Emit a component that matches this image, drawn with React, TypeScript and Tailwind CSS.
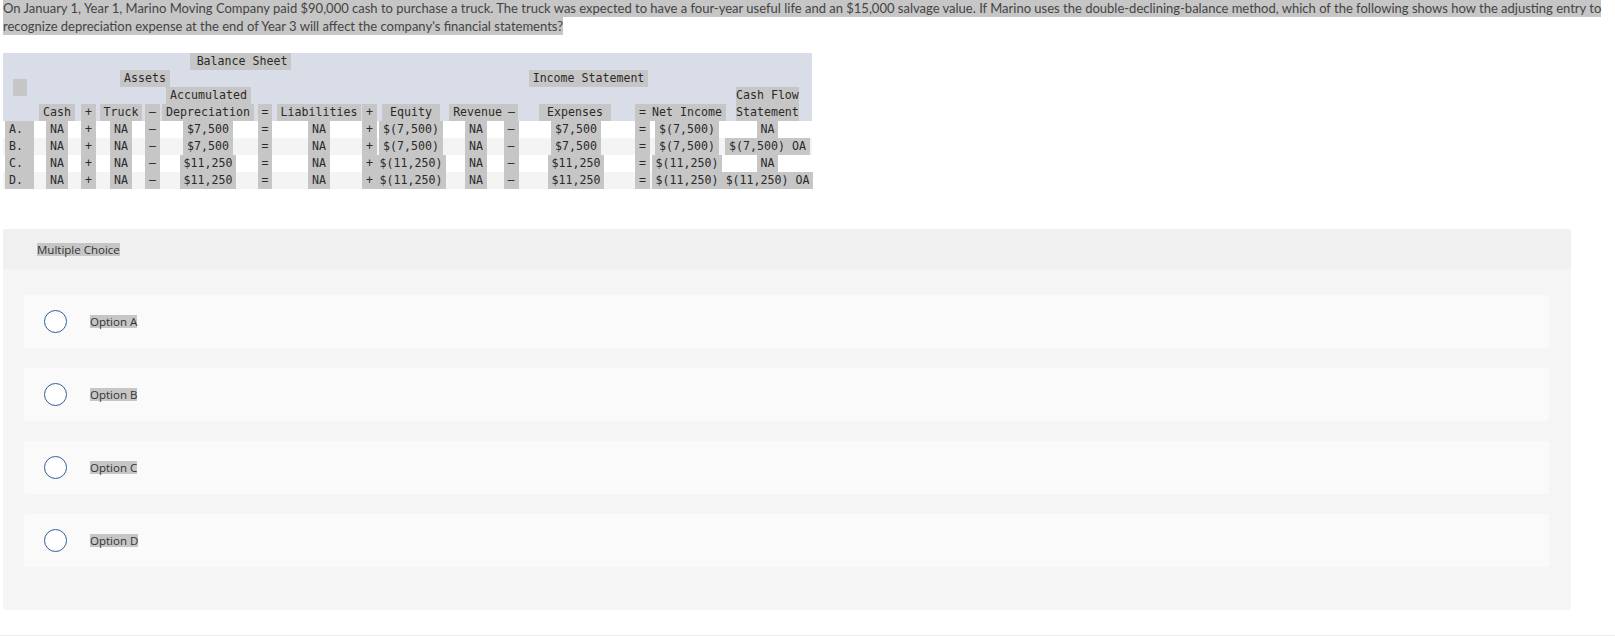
import React from "react";

const hl = "bg-[#c6c6c6]";
const cols =
  "grid grid-cols-[33px_42px_21px_44px_19px_92px_22px_86px_15px_68px_59px_14px_116px_17px_72px_89px]";

interface Row {
  label: string;
  dep: string;
  equity: string;
  expenses: string;
  netIncome: string;
  cashFlow: string;
}

const rows: Row[] = [
  { label: "A.", dep: "$7,500", equity: "$(7,500)", expenses: "$7,500", netIncome: "$(7,500)", cashFlow: "NA" },
  { label: "B.", dep: "$7,500", equity: "$(7,500)", expenses: "$7,500", netIncome: "$(7,500)", cashFlow: "$(7,500) OA" },
  { label: "C.", dep: "$11,250", equity: "$(11,250)", expenses: "$11,250", netIncome: "$(11,250)", cashFlow: "NA" },
  { label: "D.", dep: "$11,250", equity: "$(11,250)", expenses: "$11,250", netIncome: "$(11,250)", cashFlow: "$(11,250) OA" },
];

// highlighted text chunk, like a browser selection
const Hl = ({ children, className = "" }: { children: React.ReactNode; className?: string }) => (
  <span className={`${hl} inline-block h-[17px] px-[4px] whitespace-pre ${className}`}>{children}</span>
);

const Cell = ({ children, className = "" }: { children?: React.ReactNode; className?: string }) => (
  <div className={`flex justify-center h-[17px] ${className}`}>{children}</div>
);

const App = () => {
  return (
    <div className="bg-white min-h-[636px] text-[#333]">
      <p className="w-[1612px] pl-[3px] text-[13px] leading-[17.5px] font-['Lato',sans-serif] text-[#444]">
        <span className={`${hl} box-decoration-clone py-[1px]`}>
          On January 1, Year 1, Marino Moving Company paid $90,000 cash to purchase a truck. The truck was expected to
          have a four-year useful life and an $15,000 salvage value. If Marino uses the double-declining-balance method,
          which of the following shows how the adjusting entry to recognize depreciation expense at the end of Year 3
          will affect the company's financial statements?
        </span>
      </p>

      <div className="mt-[18px] ml-[3px] w-[809px] font-['DejaVu_Sans_Mono',monospace] text-[11.6px] leading-[17px] text-[#2a2a2a]">
        {/* header */}
        <div className={`${cols} grid-rows-[17px_17px_17px_17px] bg-[#d9dde7]`}>
          <div className="col-start-1 row-start-1 row-span-4 flex items-center justify-center">
            <span className={`${hl} inline-block w-[14px] h-[17px]`} />
          </div>
          <Cell className="col-start-2 col-span-9 row-start-1">
            <Hl className="pl-[7px]">Balance Sheet</Hl>
          </Cell>
          <Cell className="col-start-2 col-span-5 row-start-2">
            <Hl>Assets</Hl>
          </Cell>
          <Cell className="col-start-11 col-span-5 row-start-2 pl-[9px]">
            <Hl>Income Statement</Hl>
          </Cell>
          <Cell className="col-start-6 row-start-3 pl-[1px]">
            <Hl>Accumulated</Hl>
          </Cell>
          <div className="col-start-16 row-start-3 row-span-2 flex justify-center">
            <span className={`${hl} inline-block w-[63px] leading-[17px]`}>
              Cash Flow
              <br />
              Statement
            </span>
          </div>
          <Cell className="col-start-2 row-start-4">
            <Hl>Cash</Hl>
          </Cell>
          <Cell className="col-start-3 row-start-4">
            <Hl>+</Hl>
          </Cell>
          <Cell className="col-start-4 row-start-4">
            <Hl>Truck</Hl>
          </Cell>
          <Cell className="col-start-5 row-start-4">
            <Hl>–</Hl>
          </Cell>
          <Cell className="col-start-6 row-start-4">
            <Hl className="px-0">Depreciation</Hl>
          </Cell>
          <Cell className="col-start-7 row-start-4">
            <Hl>=</Hl>
          </Cell>
          <Cell className="col-start-8 row-start-4">
            <Hl>Liabilities</Hl>
          </Cell>
          <Cell className="col-start-9 row-start-4">
            <Hl>+</Hl>
          </Cell>
          <Cell className="col-start-10 row-start-4">
            <Hl className="px-[8px]">Equity</Hl>
          </Cell>
          <Cell className="col-start-11 row-start-4 justify-end">
            <Hl className="pr-[2px]">Revenue</Hl>
          </Cell>
          <Cell className="col-start-12 row-start-4 justify-start">
            <Hl className="px-[0px] w-[14px]">–</Hl>
          </Cell>
          <Cell className="col-start-13 row-start-4 pr-[2px]">
            <Hl className="px-[8px]">Expenses</Hl>
          </Cell>
          <Cell className="col-start-14 row-start-4">
            <Hl>=</Hl>
          </Cell>
          <Cell className="col-start-15 row-start-4">
            <Hl className="px-[1px]">Net Income</Hl>
          </Cell>
        </div>

        {/* body rows */}
        {rows.map((r, i) => (
          <div key={r.label} className={`${cols} ${i % 2 === 1 ? "bg-[#f4f4f4]" : "bg-white"}`}>
            <Cell>
              <Hl>{r.label} </Hl>
            </Cell>
            <Cell>
              <Hl>NA</Hl>
            </Cell>
            <Cell>
              <Hl>+</Hl>
            </Cell>
            <Cell>
              <Hl>NA</Hl>
            </Cell>
            <Cell>
              <Hl>–</Hl>
            </Cell>
            <Cell>
              <Hl>{r.dep}</Hl>
            </Cell>
            <Cell>
              <Hl>=</Hl>
            </Cell>
            <Cell>
              <Hl>NA</Hl>
            </Cell>
            <Cell>
              <Hl>+</Hl>
            </Cell>
            <Cell>
              <Hl className="px-[1px]">{r.equity}</Hl>
            </Cell>
            <Cell className="pl-[3px]">
              <Hl>NA</Hl>
            </Cell>
            <Cell>
              <Hl>–</Hl>
            </Cell>
            <Cell>
              <Hl>{r.expenses}</Hl>
            </Cell>
            <Cell>
              <Hl>=</Hl>
            </Cell>
            <Cell>
              <Hl className="px-[3px]">{r.netIncome}</Hl>
            </Cell>
            <Cell>
              <Hl className="px-[1px]">{r.cashFlow}</Hl>
            </Cell>
          </div>
        ))}
      </div>

      {/* multiple choice */}
      <div className="mt-[40px] ml-[3px] w-[1568px] rounded-[3px] overflow-hidden font-['Open_Sans',sans-serif]">
        <div className="h-[40px] bg-[#f0f0f0] flex items-center pl-[34px]">
          <span className={`${hl} text-[11.5px] leading-[13px] text-[#333] px-[0px]`}>Multiple Choice</span>
        </div>
        <div className="bg-[#f5f5f5] pt-[26px] pb-[43px] pl-[21px] pr-[22px] flex flex-col gap-[20px]">
          {["Option A", "Option B", "Option C", "Option D"].map((opt) => (
            <div key={opt} className="h-[53px] bg-[#fafafa] rounded-[3px] flex items-center pl-[20px]">
              <div className="w-[23px] h-[23px] rounded-full border-[1.5px] border-[#2d5f97] bg-white" />
              <span className={`${hl} ml-[23px] text-[11.5px] leading-[13px] text-[#333]`}>{opt}</span>
            </div>
          ))}
        </div>
      </div>

      <div className="mt-[25px] h-px bg-[#ececec]" />
    </div>
  );
};

export default App;
